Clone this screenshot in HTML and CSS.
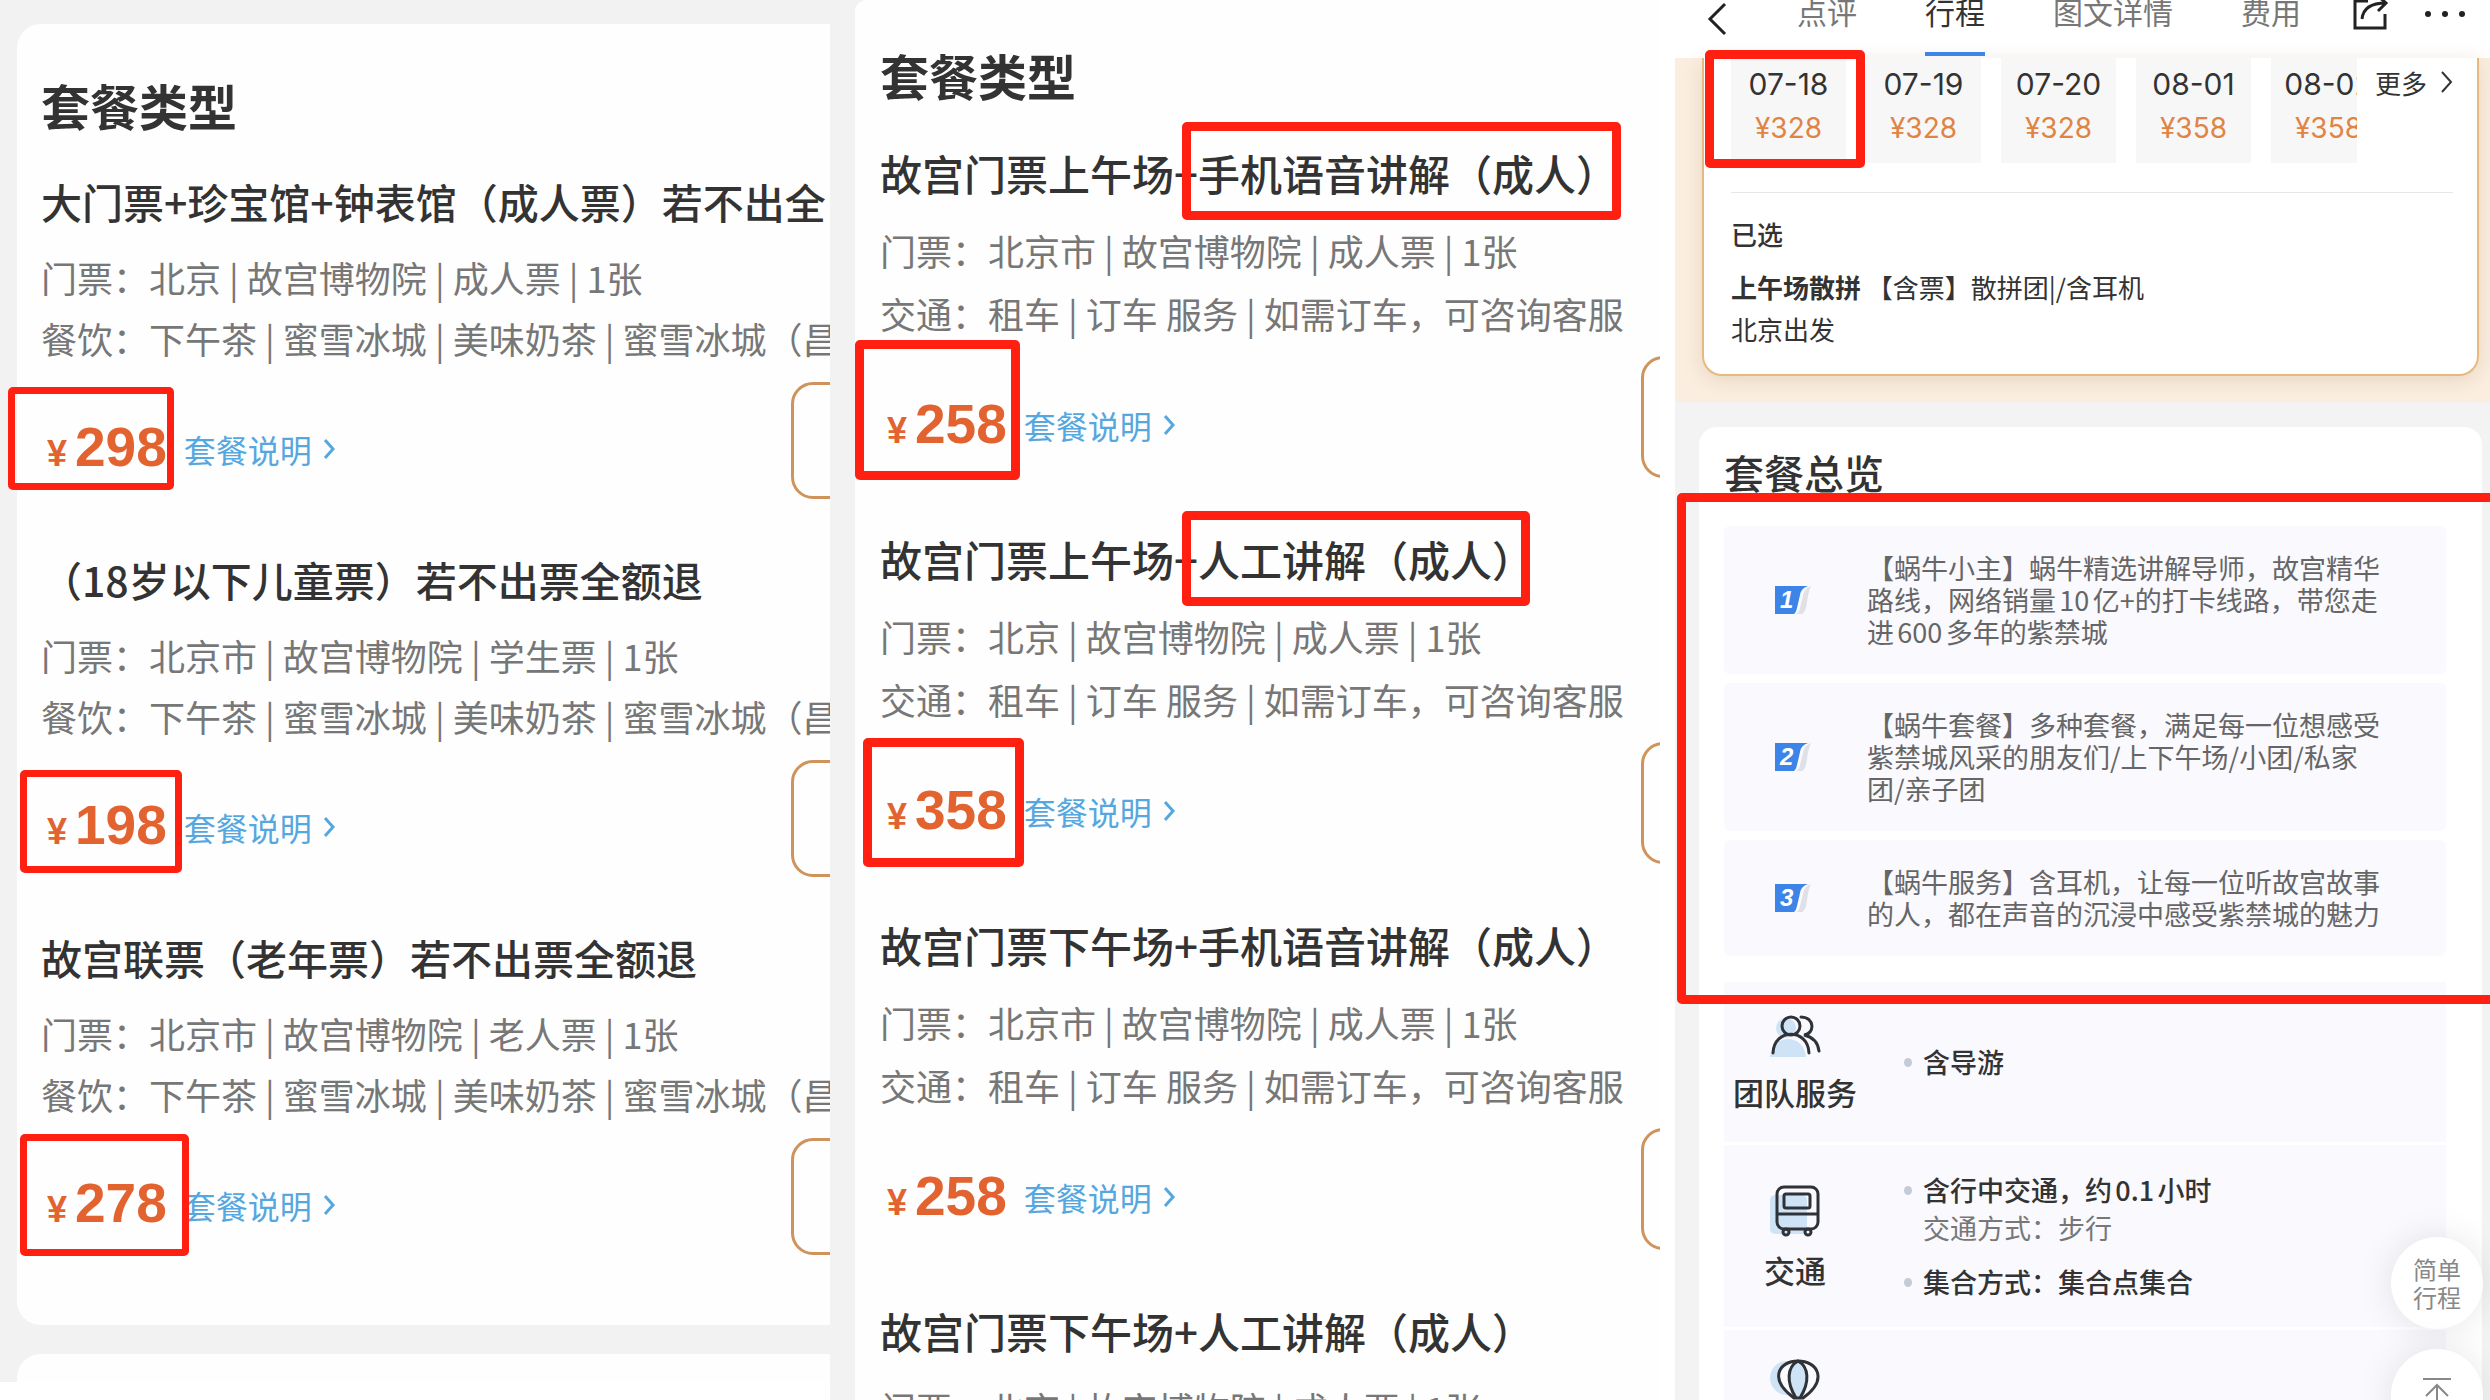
FILE: index.html
```html
<!DOCTYPE html>
<html lang="zh-CN">
<head>
  <meta charset="UTF-8">
  <title>套餐对比</title>
  <link rel="stylesheet" href="styles.css">
</head>
<body>
  <!-- Shared icons -->
  <svg class="defs" aria-hidden="true">
    <symbol id="chevron" viewBox="0 0 12 22">
      <path d="M2 2l8 9-8 9" fill="none" stroke="currentColor" stroke-width="3"/>
    </symbol>
    <symbol id="flag" viewBox="0 0 37 28">
      <path d="M36 0c-5 2-7 5-8 10l-3 12c-1 4-2 5-4 6h6c2-1 3-3 4-6l2-12c1-5 2-8 3-10z" fill="#dfe1e6"/>
      <path d="M0 0h33c-5 2-7 4-8 9l-3 13c-1 4-2 5-3 6H0z" fill="#3c84e8"/>
    </symbol>
  </svg>

  <div class="compare">
    <!-- Tickets -->
    <section class="column tickets">
      <div class="tickets-page">
        <div class="card">
          <h2>套餐类型</h2>
          <article class="package">
            <h3>大门票+珍宝馆+钟表馆（成人票）若不出全</h3>
            <p>门票：北京 | 故宫博物院 | 成人票 | 1张</p>
            <p>餐饮：下午茶 | 蜜雪冰城 | 美味奶茶 | 蜜雪冰城（昌</p>
            <div class="buy-row">
              <div class="price"><span class="yen">¥</span><span class="amount">298</span></div>
              <a class="explain" href="#">套餐说明<svg><use href="#chevron"/></svg></a>
              <button class="book" type="button" aria-label="预订"></button>
            </div>
          </article>
          <article class="package">
            <h3>（18岁以下儿童票）若不出票全额退</h3>
            <p>门票：北京市 | 故宫博物院 | 学生票 | 1张</p>
            <p>餐饮：下午茶 | 蜜雪冰城 | 美味奶茶 | 蜜雪冰城（昌</p>
            <div class="buy-row">
              <div class="price"><span class="yen">¥</span><span class="amount">198</span></div>
              <a class="explain" href="#">套餐说明<svg><use href="#chevron"/></svg></a>
              <button class="book" type="button" aria-label="预订"></button>
            </div>
          </article>
          <article class="package">
            <h3>故宫联票（老年票）若不出票全额退</h3>
            <p>门票：北京市 | 故宫博物院 | 老人票 | 1张</p>
            <p>餐饮：下午茶 | 蜜雪冰城 | 美味奶茶 | 蜜雪冰城（昌</p>
            <div class="buy-row">
              <div class="price"><span class="yen">¥</span><span class="amount">278</span></div>
              <a class="explain" href="#">套餐说明<svg><use href="#chevron"/></svg></a>
              <button class="book" type="button" aria-label="预订"></button>
            </div>
          </article>
        </div>
        <div class="card next-card"></div>
      </div>
      <div class="mark mark-298"></div>
      <div class="mark mark-198"></div>
      <div class="mark mark-278"></div>
    </section>

    <!-- Guided visits -->
    <section class="column guides">
      <div class="card">
        <h2>套餐类型</h2>
        <article class="package">
          <h3>故宫门票上午场+手机语音讲解（成人）</h3>
          <p>门票：北京市 | 故宫博物院 | 成人票 | 1张</p>
          <p>交通：租车 | 订车 服务 | 如需订车，可咨询客服</p>
          <div class="buy-row">
            <div class="price"><span class="yen">¥</span><span class="amount">258</span></div>
            <a class="explain" href="#">套餐说明<svg><use href="#chevron"/></svg></a>
            <button class="book" type="button" aria-label="预订"></button>
          </div>
        </article>
        <article class="package">
          <h3>故宫门票上午场+人工讲解（成人）</h3>
          <p>门票：北京 | 故宫博物院 | 成人票 | 1张</p>
          <p>交通：租车 | 订车 服务 | 如需订车，可咨询客服</p>
          <div class="buy-row">
            <div class="price"><span class="yen">¥</span><span class="amount">358</span></div>
            <a class="explain" href="#">套餐说明<svg><use href="#chevron"/></svg></a>
            <button class="book" type="button" aria-label="预订"></button>
          </div>
        </article>
        <article class="package">
          <h3>故宫门票下午场+手机语音讲解（成人）</h3>
          <p>门票：北京市 | 故宫博物院 | 成人票 | 1张</p>
          <p>交通：租车 | 订车 服务 | 如需订车，可咨询客服</p>
          <div class="buy-row">
            <div class="price"><span class="yen">¥</span><span class="amount">258</span></div>
            <a class="explain" href="#">套餐说明<svg><use href="#chevron"/></svg></a>
            <button class="book" type="button" aria-label="预订"></button>
          </div>
        </article>
        <article class="package">
          <h3>故宫门票下午场+人工讲解（成人）</h3>
          <p>门票：北京 | 故宫博物院 | 成人票 | 1张</p>
        </article>
      </div>
      <div class="mark thick mark-audio"></div>
      <div class="mark thick mark-258"></div>
      <div class="mark thick mark-human"></div>
      <div class="mark thick mark-358"></div>
    </section>

    <!-- Group tour -->
    <section class="column tour">
      <header class="topbar">
        <button class="icon-btn" type="button" aria-label="返回">
          <svg width="20" height="36" viewBox="0 0 20 36"><path d="M18 4L3 19l15 15" fill="none" stroke="#222" stroke-width="3"/></svg>
        </button>
        <nav class="tabs">
          <a href="#">点评</a>
          <a class="active" href="#">行程</a>
          <a href="#">图文详情</a>
          <a href="#">费用</a>
        </nav>
        <div class="actions">
          <button class="icon-btn" type="button" aria-label="分享">
            <svg width="38" height="30" viewBox="0 0 38 30"><path d="M16 1H3v27h30V14" fill="none" stroke="#222" stroke-width="3"/><path d="M10 19C11 9 18 3 34 3M26-4l8 7-8 8" fill="none" stroke="#222" stroke-width="3"/></svg>
          </button>
          <button class="icon-btn" type="button" aria-label="更多操作">
            <svg width="42" height="30" viewBox="0 0 42 30"><g fill="#222"><circle cx="4" cy="14" r="3"/><circle cx="21" cy="14" r="3"/><circle cx="38" cy="14" r="3"/></g></svg>
          </button>
        </div>
      </header>

      <div class="selection">
        <div class="selected-card">
          <div class="dates">
            <div class="date-list">
              <button type="button"><span>07-18</span><b>¥328</b></button>
              <button type="button"><span>07-19</span><b>¥328</b></button>
              <button type="button"><span>07-20</span><b>¥328</b></button>
              <button type="button"><span>08-01</span><b>¥358</b></button>
              <button type="button"><span>08-02</span><b>¥358</b></button>
            </div>
            <a class="more" href="#">更多<svg width="13" height="22" viewBox="0 0 13 22"><path d="M2 1l9 10-9 10" fill="none" stroke="#333" stroke-width="2"/></svg></a>
          </div>
          <div class="chosen">
            <h4>已选</h4>
            <p><strong>上午场散拼</strong> 【含票】散拼团|/含耳机</p>
            <p>北京出发</p>
          </div>
        </div>
      </div>

      <div class="overview">
        <h2>套餐总览</h2>
        <ol class="highlights">
          <li>
            <span class="rank"><svg><use href="#flag"/></svg><i>1</i></span>
            <p>【蜗牛小主】蜗牛精选讲解导师，故宫精华<br>路线，网络销量10亿+的打卡线路，带您走<br>进600多年的紫禁城</p>
          </li>
          <li>
            <span class="rank"><svg><use href="#flag"/></svg><i>2</i></span>
            <p>【蜗牛套餐】多种套餐，满足每一位想感受<br>紫禁城风采的朋友们/上下午场/小团/私家<br>团/亲子团</p>
          </li>
          <li>
            <span class="rank"><svg><use href="#flag"/></svg><i>3</i></span>
            <p>【蜗牛服务】含耳机，让每一位听故宫故事<br>的人，都在声音的沉浸中感受紫禁城的魅力</p>
          </li>
        </ol>

        <div class="services">
          <div class="service">
            <div class="kind">
              <svg width="52" height="44" viewBox="0 0 52 44">
                <g fill="#cfe3f6"><circle cx="17" cy="13" r="10"/><path d="M1 42C3 18 35 18 37 42z"/></g>
                <g fill="none" stroke="#2f3338" stroke-width="3" stroke-linecap="round"><circle cx="22" cy="11" r="9"/><path d="M4 38C5 13 39 13 40 38M32 2c14 0 14 17 3 18 9 2 14 8 15 16"/></g>
              </svg>
              <span>团队服务</span>
            </div>
            <ul>
              <li>含导游</li>
            </ul>
          </div>
          <div class="service traffic">
            <div class="kind">
              <svg width="52" height="52" viewBox="0 0 52 52">
                <rect x="1" y="10" width="37" height="39" rx="5" fill="#cfe3f6"/>
                <g fill="none" stroke="#2f3338" stroke-width="3"><rect x="8" y="2" width="41" height="42" rx="7"/><rect x="15" y="9" width="26" height="14" rx="2"/><path d="M8 29h41"/><circle cx="17" cy="47" r="3"/><circle cx="39" cy="47" r="3"/></g>
              </svg>
              <span>交通</span>
            </div>
            <ul>
              <li>含行中交通，约0.1小时<small>交通方式：步行</small></li>
              <li>集合方式：集合点集合</li>
            </ul>
          </div>
          <div class="service sights">
            <div class="kind">
              <svg width="52" height="52" viewBox="0 0 52 52">
                <circle cx="18" cy="19" r="17" fill="#cfe3f6"/>
                <path d="M28 39C-1 20 11 2 29 2s32 18 1 37z" fill="#f9f9fe"/>
                <path d="M29 39C16 23 18 8 29 2c12 6 13 21 0 37z" fill="#cfe3f6"/>
                <g fill="none" stroke="#2f3338" stroke-width="3"><path d="M25 39C-1 20 10 2 29 2s31 18 5 37z"/><path d="M27 39C17 23 18 8 29 2c11 6 12 21 2 37"/></g>
              </svg>
            </div>
          </div>
        </div>
      </div>

      <div class="floating">
        <button type="button">简单<br>行程</button>
        <button type="button" aria-label="回到顶部">
          <svg width="28" height="36" viewBox="0 0 28 36"><path d="M0 2h28M14 34V8M3 19L14 8l11 11" fill="none" stroke="#888" stroke-width="2"/></svg>
        </button>
      </div>

      <div class="mark thick mark-date"></div>
      <div class="mark thick mark-overview"></div>
    </section>
  </div>
</body>
</html>
```
FILE: styles.css
```css
* { box-sizing: border-box; }
body { margin: 0; background: #fff; color: #333; font-family: "Noto Sans CJK SC", sans-serif; }
h2, h3, h4, p, ul, ol { margin: 0; padding: 0; font-weight: 400; }
ul, ol { list-style: none; }
a { color: inherit; text-decoration: none; }
button { padding: 0; border: 0; background: none; color: inherit; font: inherit; cursor: pointer; }
svg { display: block; flex: none; }
.defs { position: absolute; width: 0; height: 0; }

.compare { display: grid; grid-template-columns: repeat(3, minmax(0, 1fr)); height: 100vh; overflow: hidden; }
.column { position: relative; overflow: hidden; }

/* Package lists */
.tickets-page { padding: 24px 0 0 17px; background: #f2f2f2; }
.card { background: #fefefe; border-radius: 24px 0 0 24px; }
.tickets .card { padding: 51px 0 17px 24px; }
.tickets .next-card { margin-top: 29px; padding: 0; height: 28px; border-radius: 24px 0 0 0; }
.guides { padding-left: 25px; background: #f2f2f2; }
.guides .card { padding: 45px 0 0 25px; border-radius: 12px 0 0 0; }
.card h2 { margin-bottom: 36px; font-size: 49px; line-height: 60px; font-weight: 700; }
.guides h2 { margin-bottom: 38px; }
.package { padding-bottom: 50px; white-space: nowrap; }
.package:last-child { padding-bottom: 53px; }
.guides .package { padding-bottom: 51px; }
.package h3 { margin-bottom: 16px; font-size: 41px; line-height: 60px; font-weight: 500; }
.guides h3 { font-size: 42px; }
.package p { color: #777; font-size: 36px; line-height: 61px; }
.guides p { line-height: 63px; }
.buy-row { display: flex; align-items: center; margin-top: 13px; padding-left: 6px; }
.guides .buy-row { margin-top: 11px; padding-left: 7px; }
.price { display: flex; align-items: baseline; gap: 8px; margin-top: 20px; color: #e2632f; font-family: "Liberation Sans", sans-serif; font-weight: 700; line-height: 60px; }
.yen { font-size: 36px; }
.amount { font-size: 55px; }
.explain { display: flex; align-items: center; gap: 11px; margin: 16px 0 0 17px; color: #56a7de; font-size: 32px; line-height: 48px; }
.explain svg { width: 12px; height: 22px; }
.book { width: 200px; height: 117px; margin: 0 -161px 0 auto; border: 3px solid #cf935c; border-radius: 22px; flex: none; }
.guides .book { height: 122px; margin-right: -181px; }

/* Red highlight frames */
.mark { position: absolute; border: 7px solid #ff2012; border-radius: 5px; pointer-events: none; }
.mark.thick { border-width: 9px; }
.mark-298 { left: 8px; top: 387px; width: 166px; height: 103px; }
.mark-198 { left: 20px; top: 770px; width: 162px; height: 103px; }
.mark-278 { left: 20px; top: 1134px; width: 169px; height: 122px; }
.mark-audio { left: 352px; top: 122px; width: 439px; height: 98px; }
.mark-258 { left: 25px; top: 340px; width: 165px; height: 140px; }
.mark-human { left: 352px; top: 511px; width: 348px; height: 95px; }
.mark-358 { left: 33px; top: 738px; width: 161px; height: 129px; }
.mark-date { left: 45px; top: 50px; width: 160px; height: 118px; }
.mark-overview { left: 17px; right: -20px; top: 493px; height: 511px; }

/* Tour page */
.tour { padding-left: 15px; background: #f3f3f3; }
.tour::before { content: ""; position: absolute; left: 0; top: 0; bottom: 0; width: 15px; background: #fff; }
.topbar { display: flex; align-items: flex-start; height: 58px; padding: 0 24px 0 32px; background: #fff; }
.tabs { display: flex; gap: 68px; margin: -9px 0 0 70px; color: #777; font-size: 30px; line-height: 40px; white-space: nowrap; }
.tabs a { height: 65px; }
.tabs .active { color: #333; border-bottom: 4px solid #3d85e8; }
.actions { display: flex; gap: 34px; margin-left: auto; }
.selection { padding: 0 11px 26px 27px; background: #fbeee0; }
.selected-card { padding: 0 24px 24px 27px; background: #fff; border: 2px solid #e6b980; border-top: 0; border-radius: 0 0 20px 20px; box-shadow: 0 4px 20px rgba(150, 110, 70, 0.2); }
.dates { display: flex; padding-bottom: 29px; border-bottom: 1px solid #e6e6e6; }
.date-list { display: flex; flex: 1; gap: 20px; min-width: 0; overflow: hidden; }
.date-list button { display: flex; flex: none; flex-direction: column; align-items: center; width: 115px; padding: 4px 0 13px; background: #f7f7f7; font-family: Inter, sans-serif; line-height: 44px; }
.date-list span { font-size: 30px; }
.date-list b { color: #df8444; font-size: 28px; font-weight: 400; }
.more { display: flex; align-items: center; gap: 13px; height: 48px; margin-left: 18px; font-size: 26px; }
.chosen { padding-top: 23px; font-size: 26px; line-height: 42px; }
.chosen h4 { margin-bottom: 14px; font-weight: 500; line-height: 36px; }
.chosen strong { font-weight: 700; }
.overview { margin: 25px 8px 0 24px; padding: 15px 36px 0 25px; background: #fff; border-radius: 18px 18px 0 0; }
.overview h2 { margin-bottom: 24px; font-size: 40px; line-height: 60px; font-weight: 500; }
.highlights { display: grid; gap: 9px; margin-bottom: 26px; }
.highlights li { display: flex; align-items: center; gap: 55px; padding: 26px 0 26px 51px; background: #f9f9fe; border-radius: 6px; }
.highlights p { color: #666; font-size: 27px; line-height: 32px; white-space: nowrap; text-autospace: normal; }
.rank { display: grid; flex: none; width: 37px; height: 28px; }
.rank svg, .rank i { grid-area: 1 / 1; width: 37px; height: 28px; }
.rank i { padding-left: 5px; color: #fff; font: italic 700 24px/28px "Liberation Sans", sans-serif; }
.services { display: grid; gap: 3px; }
.service { display: flex; align-items: center; padding: 33px 0; background: #f9f9fe; }
.service.traffic { padding: 26px 0; }
.service.sights { padding: 29px 0; }
.kind { display: flex; flex-direction: column; align-items: center; gap: 16px; width: 142px; font-size: 31px; font-weight: 500; line-height: 34px; }
.service ul { display: grid; gap: 16px; margin-left: 38px; font-size: 27px; font-weight: 500; line-height: 38px; text-autospace: normal; }
.service li { display: grid; grid-template-columns: 8px auto; align-items: center; column-gap: 11px; }
.service li::before { content: ""; width: 8px; height: 9px; border-radius: 50%; background: #c3ccd6; }
.service small { grid-column: 2; color: #777; font-size: 27px; font-weight: 400; }
.floating { position: absolute; right: 7px; bottom: -41px; display: grid; gap: 20px; }
.floating button { display: grid; place-content: center; width: 92px; height: 92px; border-radius: 50%; background: #fff; box-shadow: 0 0 36px rgba(0, 0, 0, 0.1); color: #888; font-size: 24px; line-height: 28px; }
```
